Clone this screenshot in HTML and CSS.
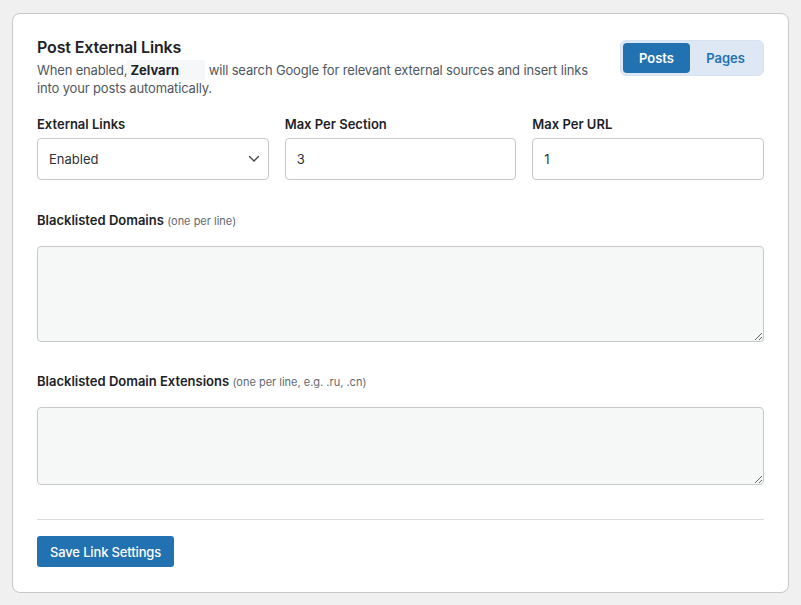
FILE: index.html
```html
<!DOCTYPE html>
<html>
<head>
<meta charset="utf-8">
<link rel="stylesheet" href="styles.css">
</head>
<body>
<div class="card">
  <div class="header">
    <div class="intro">
      <h2 class="title">Post External Links</h2>
      <p class="desc">When enabled,<span class="brand">Zelvarn</span> will search Google for relevant external sources and insert links into your posts automatically.</p>
    </div>
    <div class="toggle">
      <button class="tab active">Posts</button>
      <button class="tab">Pages</button>
    </div>
  </div>

  <div class="fields">
    <div class="field">
      <label class="label">External Links</label>
      <div class="select">
        <span>Enabled</span>
        <svg class="chev" width="12" height="8" viewBox="0 0 12 8"><path d="M1.5 1.5 L6 6 L10.5 1.5" fill="none" stroke="#3c434a" stroke-width="1.3" stroke-linecap="round" stroke-linejoin="round"/></svg>
      </div>
    </div>
    <div class="field">
      <label class="label">Max Per Section</label>
      <input class="input" type="text" value="3">
    </div>
    <div class="field">
      <label class="label">Max Per URL</label>
      <input class="input" type="text" value="1">
    </div>
  </div>

  <div class="block">
    <label class="label">Blacklisted Domains <span class="hint">(one per line)</span></label>
    <textarea class="area tall"></textarea>
  </div>

  <div class="block">
    <label class="label">Blacklisted Domain Extensions <span class="hint">(one per line, e.g. .ru, .cn)</span></label>
    <textarea class="area short"></textarea>
  </div>

  <div class="footer">
    <button class="save">Save Link Settings</button>
  </div>
</div>
</body>
</html>
```
FILE: styles.css
```css
* { box-sizing: border-box; }
body {
  margin: 0;
  background: #f0f0f1;
  font-family: Inter, "Open Sans", "Liberation Sans", sans-serif;
  color: #1d2327;
}
.card {
  margin: 13px 12px;
  background: #fff;
  border: 1px solid #c8c9cc;
  border-radius: 8px;
  padding: 24px;
  height: 580px;
}
.header {
  display: flex;
  justify-content: space-between;
  align-items: flex-start;
}
.intro { width: 570px; }
.title {
  margin: 0;
  font-size: 16px;
  line-height: 19px;
  font-weight: 600;
  letter-spacing: -0.15px;
  color: #1d2327;
}
.desc {
  margin: 4px 0 0;
  font-size: 13px;
  line-height: 18px;
  letter-spacing: -0.15px;
  color: #50575e;
}
.brand {
  display: inline-block;
  background: #f6f7f9;
  font-weight: 700;
  color: #1d2327;
  letter-spacing: 0;
  line-height: 18px;
  padding: 1px 26px 1px 3px;
  margin: -1px 0;
}
.toggle {
  margin-top: 2px;
  display: flex;
  background: #dde8f4;
  border-radius: 6px;
  padding: 2px;
  border: 1px solid #d5e2f0;
}
.tab {
  border: 0;
  background: transparent;
  font-family: inherit;
  font-size: 13px;
  font-weight: 600;
  color: #2271b1;
  height: 30px;
  padding: 0;
  border-radius: 4px;
  width: 67px;
}
.tab + .tab { width: 71px; }
.tab.active {
  background: #2271b1;
  color: #fff;
}
.fields {
  margin-top: 19px;
  display: grid;
  grid-template-columns: repeat(3, 1fr);
  column-gap: 16px;
}
.field { display: flex; flex-direction: column; }
.label {
  display: block;
  font-size: 13px;
  line-height: 16px;
  font-weight: 600;
  color: #1d2327;
  margin-bottom: 6px;
}
.hint {
  font-size: 11px;
  font-weight: 400;
  color: #646970;
}
.select, .input {
  height: 42px;
  border: 1px solid #c8c9cc;
  border-radius: 4px;
  background: #fff;
  font-family: inherit;
  font-size: 13px;
  color: #2c3338;
  padding: 0 11px;
}
.select {
  display: flex;
  align-items: center;
  justify-content: space-between;
  padding-right: 8px;
}
.input { outline: none; width: 100%; }
.block { margin-top: 32px; }
.block .label { margin-bottom: 17px; }
.block + .block { margin-top: 31px; }
.area {
  display: block;
  width: 100%;
  background: #f6f7f7;
  border: 1px solid #c8c9cc;
  border-radius: 4px;
  font-family: inherit;
  font-size: 13px;
  padding: 8px 11px;
  resize: vertical;
}
.tall { height: 96px; }
.short { height: 78px; }
.footer {
  margin-top: 34px;
  border-top: 1px solid #dcdcde;
  padding-top: 16px;
}
.save {
  height: 31px;
  border: 0;
  border-radius: 3px;
  background: #2271b1;
  color: #fff;
  font-family: inherit;
  font-size: 13px;
  font-weight: 500;
  letter-spacing: -0.15px;
  padding: 0 13px;
}
```
